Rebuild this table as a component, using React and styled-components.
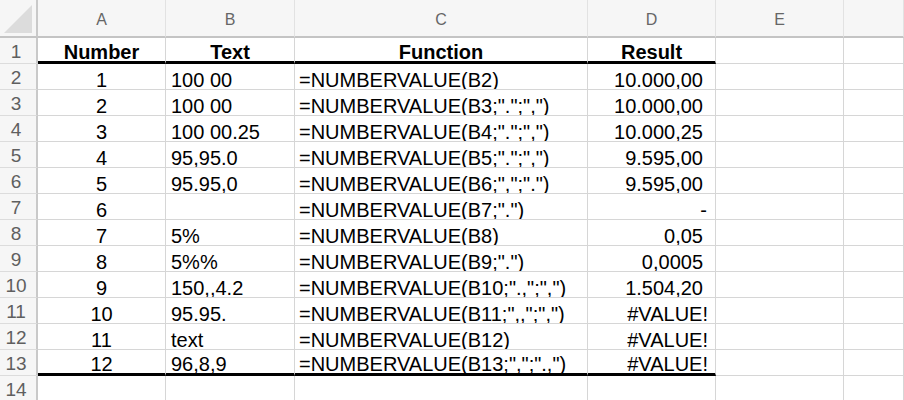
import React from 'react'
import styled, { createGlobalStyle } from 'styled-components'

const GlobalStyle = createGlobalStyle`
  html, body {
    margin: 0;
    padding: 0;
    background: #ffffff;
    overflow: hidden;
  }
`

const Sheet = styled.div`
  display: grid;
  grid-template-columns: 38px 128px 129px 293px 128px 128px 1fr;
  grid-template-rows: 38px;
  grid-auto-rows: 26px;
  width: 904px;
  height: 400px;
  overflow: hidden;
  font-family: 'Liberation Sans', Arial, sans-serif;
`

const Corner = styled.div`
  position: relative;
  background: #f6f6f6;
  border-right: 2px solid #c9c9c9;
  border-bottom: 2px solid #c4c4c4;
  box-sizing: border-box;
  &::after {
    content: '';
    position: absolute;
    right: 4px;
    bottom: 3px;
    width: 0;
    height: 0;
    border-left: 28px solid transparent;
    border-bottom: 28px solid #dcdcdc;
  }
`

const ColHead = styled.div`
  display: flex;
  align-items: flex-end;
  justify-content: center;
  box-sizing: border-box;
  background: #f6f6f6;
  border-right: 1px solid #e2e2e2;
  border-bottom: 2px solid #c4c4c4;
  padding-bottom: 8px;
  font-size: 16px;
  line-height: 16px;
  color: #666666;
`

const RowHead = styled.div`
  display: flex;
  align-items: flex-end;
  justify-content: center;
  box-sizing: border-box;
  background: #f6f6f6;
  border-right: 2px solid #c9c9c9;
  border-bottom: 1px solid #dcdcdc;
  padding: 0 4px 2px 0;
  font-size: 19px;
  line-height: 19px;
  color: #5f5f5f;
`

const Cell = styled.div`
  display: flex;
  align-items: flex-end;
  justify-content: ${(p) =>
    p.$align === 'center' ? 'center' : p.$align === 'right' ? 'flex-end' : 'flex-start'};
  box-sizing: border-box;
  border-right: 1px solid #d6d6d6;
  border-bottom: ${(p) => (p.$thick ? '3px solid #000000' : '1px solid #d6d6d6')};
  padding: 0 ${(p) => p.$padRight || 0}px 0 ${(p) => p.$padLeft || 0}px;
  font-size: 20px;
  line-height: 18px;
  font-weight: ${(p) => (p.$bold ? 700 : 400)};
  color: #000000;
  white-space: nowrap;
  overflow: hidden;
`

const columns = ['A', 'B', 'C', 'D', 'E', '']

const rows = [
  ['1', '100 00', '=NUMBERVALUE(B2)', '10.000,00'],
  ['2', '100 00', '=NUMBERVALUE(B3;".";",")', '10.000,00'],
  ['3', '100 00.25', '=NUMBERVALUE(B4;".";",")', '10.000,25'],
  ['4', '95,95.0', '=NUMBERVALUE(B5;".";",")', '9.595,00'],
  ['5', '95.95,0', '=NUMBERVALUE(B6;",";".")', '9.595,00'],
  ['6', '', '=NUMBERVALUE(B7;".")', '-'],
  ['7', '5%', '=NUMBERVALUE(B8)', '0,05'],
  ['8', '5%%', '=NUMBERVALUE(B9;".")', '0,0005'],
  ['9', '150,,4.2', '=NUMBERVALUE(B10;".,";",")', '1.504,20'],
  ['10', '95.95.', '=NUMBERVALUE(B11;",,";",")', '#VALUE!'],
  ['11', 'text', '=NUMBERVALUE(B12)', '#VALUE!'],
  ['12', '96,8,9', '=NUMBERVALUE(B13;",";".,")', '#VALUE!'],
]

function resultPad(value) {
  if (value.startsWith('#')) return 7
  if (value === '-') return 8
  return 12
}

export default function App() {
  return (
    <>
      <GlobalStyle />
      <Sheet>
        <Corner />
        {columns.map((c, i) => (
          <ColHead key={'h' + i}>{c}</ColHead>
        ))}

        <RowHead>1</RowHead>
        <Cell $align="center" $bold $thick>Number</Cell>
        <Cell $align="center" $bold $thick>Text</Cell>
        <Cell $align="center" $bold $thick>Function</Cell>
        <Cell $align="center" $bold $thick>Result</Cell>
        <Cell />
        <Cell />

        {rows.map((r, i) => {
          const last = i === rows.length - 1
          return (
            <React.Fragment key={i}>
              <RowHead>{i + 2}</RowHead>
              <Cell $align="center" $thick={last}>{r[0]}</Cell>
              <Cell $padLeft={5} $thick={last}>{r[1]}</Cell>
              <Cell $padLeft={4} $thick={last}>{r[2]}</Cell>
              <Cell $align="right" $padRight={resultPad(r[3])} $thick={last}>
                {r[3]}
              </Cell>
              <Cell />
              <Cell />
            </React.Fragment>
          )
        })}

        <RowHead>14</RowHead>
        <Cell />
        <Cell />
        <Cell />
        <Cell />
        <Cell />
        <Cell />
      </Sheet>
    </>
  )
}
